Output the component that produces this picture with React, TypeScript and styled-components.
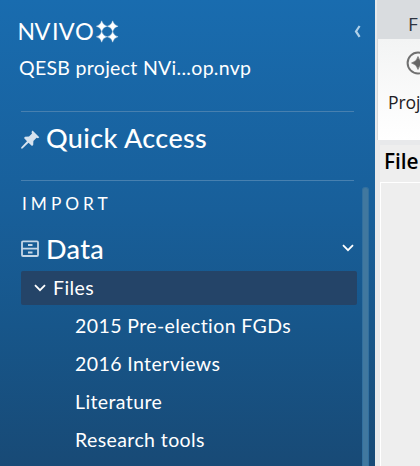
import React from "react";
import styled, { createGlobalStyle } from "styled-components";

const Global = createGlobalStyle`
  * { box-sizing: border-box; }
  body { margin: 0; overflow: hidden; font-family: Lato, "Open Sans", sans-serif; }
`;

const Window = styled.div`
  display: flex;
  width: 420px;
  height: 466px;
  overflow: hidden;
  background: #e8e9eb;
`;

const Sidebar = styled.aside`
  display: flex;
  flex-direction: column;
  flex: 0 0 375px;
  height: 466px;
  padding-left: 21px;
  color: #fff;
  background: linear-gradient(180deg, #196caf 0%, #185f9a 45%, #17568a 70%, #184a76 100%);
`;

const Brand = styled.header`
  display: flex;
  justify-content: space-between;
  align-items: flex-start;
  height: 53px;
  padding: 21px 14px 0 0;
  margin-left: -3px;
`;

const CollapseButton = styled.span`
  display: flex;
  margin-top: 4px;
`;

const ProjectName = styled.div`
  height: 58px;
  line-height: 30px;
  margin-left: -2px;
  font-size: 19.5px;
  letter-spacing: 0.3px;
  white-space: nowrap;
`;

const Rule = styled.hr`
  flex: none;
  width: 333px;
  height: 1px;
  margin: 0;
  border: 0;
  background: #4780b0;
`;

const Heading = styled.div<{ $height: number }>`
  display: flex;
  align-items: center;
  height: ${(p) => p.$height}px;
  width: 333px;
  font-size: 27px;
  font-weight: 500;
  letter-spacing: 0.35px;
  white-space: nowrap;
`;

const QuickAccess = styled(Heading)`
  margin-bottom: 13px;
`;

const HeadingIcon = styled.span`
  display: flex;
  width: 25px;
`;

const HeadingText = styled.span<{ $lift?: number }>`
  flex: 1;
  margin-top: -${(p) => p.$lift ?? 0}px;
`;

const Scroller = styled.div`
  display: flex;
  justify-content: space-between;
  flex: 1;
  padding-right: 6px;
`;

const Tree = styled.div`
  width: 336px;
`;

const SectionLabel = styled.div`
  height: 44px;
  padding: 0 0 0 1px;
  line-height: 45px;
  font-size: 17.3px;
  letter-spacing: 4px;
`;

const SelectedRow = styled.div`
  display: flex;
  align-items: center;
  height: 34px;
  margin-bottom: 2px;
  padding: 0 0 1px 13px;
  gap: 7px;
  border-radius: 2px;
  background: #244468;
  font-size: 19.5px;
  letter-spacing: 0.4px;
`;

const FileRow = styled.div`
  height: 38px;
  padding-left: 54px;
  line-height: 38px;
  font-size: 19.5px;
  letter-spacing: 0.4px;
  white-space: nowrap;
`;

const Scrollbar = styled.div`
  width: 7px;
  margin-top: 6px;
  border: 1px solid #32709f;
  border-bottom: 0;
  border-radius: 3px 3px 0 0;
  background: #41789f;
`;

const Workspace = styled.main`
  display: flex;
  flex-direction: column;
  flex: 1;
  min-width: 0;
  padding-left: 2px;
  color: #1f2024;
  white-space: nowrap;
  font-family: "Open Sans", sans-serif;
`;

const TabStrip = styled.div`
  height: 39px;
  padding: 10px 0 0 31px;
  line-height: 28px;
  font-size: 19px;
  color: #2d3440;
  background: #d9dcdf;
`;

const Ribbon = styled.div`
  height: 101px;
  padding: 12px 0 0 10px;
  border-left: 1px solid #d5d8da;
  background: linear-gradient(180deg, #f3f4f4, #fff);
`;

const RibbonIcon = styled.div`
  height: 24px;
  padding-left: 18px;
`;

const RibbonLabel = styled.div`
  margin-top: 13px;
  line-height: 28px;
  font-size: 17.6px;
  letter-spacing: -0.15px;
`;

const ListHeader = styled.div`
  height: 37px;
  margin: 5px 0 0 3px;
  padding-left: 4px;
  line-height: 33px;
  font-size: 20.8px;
  font-weight: 600;
  letter-spacing: -0.1px;
  color: #000;
  background: #eee;
`;

const ListBody = styled.div`
  flex: 1;
  margin-left: 3px;
  border: 1px solid #fff;
  border-width: 1px 0 0 1px;
  background: #eee;
`;

const LogoSvg = styled.svg`
  overflow: visible;
`;

const Logo = () => (
  <LogoSvg width="102" height="22" viewBox="0 0 102 22" fill="#fff">
    <g fontFamily="Lato, sans-serif" fontSize="23.5">
      <text x="-.6" y="19" textLength="17.5" lengthAdjust="spacingAndGlyphs">N</text>
      <text x="16.5" y="19">V</text>
      <text x="34" y="19">I</text>
      <text x="40.8" y="19">V</text>
      <text x="57" y="19">O</text>
    </g>
    {[[83.7, 5.2], [94.7, 5.2], [83.7, 15.8], [94.7, 15.8]].map(([x, y]) => (
      <path
        key={`${x}-${y}`}
        transform={`translate(${x} ${y})`}
        d="M0-5.4Q1-1 5.4 0Q1 1 0 5.4Q-1 1-5.4 0Q-1-1 0-5.4Z"
        stroke="#fff"
        strokeWidth=".3"
      />
    ))}
  </LogoSvg>
);

const Pin = () => (
  <svg width="19" height="19" viewBox="0 0 19 19" fill="#d5e2ef">
    <path d="M11.5 .5L18.3 7.2L17 8.2L15.6 7.7L12.4 11L12.2 15L11 16L7.5 12.8L1.5 18.4L0 18.6L.3 17.3L6 11.3L3 8L4 6.7L8 6.5L11 3.4L10.5 2Z" />
  </svg>
);

const Drawers = () => (
  <svg width="19" height="17" viewBox="0 0 19 17" fill="none" stroke="#c6d7e7" strokeWidth="1.8">
    <rect x="1" y="1.4" width="16" height="14.6" rx="1" />
    <path d="M1 8.7H17M7 5H11.5M7 12.5H11.5" />
  </svg>
);

const ChevronDown = () => (
  <svg width="12" height="8" viewBox="0 0 12 8" fill="none" stroke="#fff" strokeWidth="1.8">
    <path d="M1 1.2L6 6.2L11 1.2" />
  </svg>
);

const Collapse = () => (
  <svg width="7" height="13" viewBox="0 0 7 13" fill="none" stroke="#b0d1e9" strokeWidth="2.2">
    <path d="M5.6 1L2 6.4L5.6 11.8" />
  </svg>
);

const CompassStar = () => (
  <svg width="24" height="24" viewBox="0 0 24 24">
    <circle cx="12" cy="12" r="10.4" fill="none" stroke="#707070" strokeWidth="2" />
    <path d="M12 5.5Q13.3 10.7 18.5 12Q13.3 13.3 12 18.5Q10.7 13.3 5.5 12Q10.7 10.7 12 5.5Z" fill="#666" stroke="#666" strokeWidth=".6" />
  </svg>
);

const files = ["2015 Pre-election FGDs", "2016 Interviews", "Literature", "Research tools"];

export default function App() {
  return (
    <Window>
      <Global />
      <Sidebar>
        <Brand>
          <Logo />
          <CollapseButton><Collapse /></CollapseButton>
        </Brand>
        <ProjectName>QESB project NVi...op.nvp</ProjectName>
        <Rule />
        <QuickAccess $height={55}>
          <HeadingIcon><Pin /></HeadingIcon>
          <HeadingText $lift={4}>Quick Access</HeadingText>
        </QuickAccess>
        <Rule />
        <Scroller>
          <Tree>
            <SectionLabel>IMPORT</SectionLabel>
            <Heading $height={46}>
              <HeadingIcon><Drawers /></HeadingIcon>
              <HeadingText>Data</HeadingText>
              <ChevronDown />
            </Heading>
            <SelectedRow><ChevronDown />Files</SelectedRow>
            {files.map((f) => <FileRow key={f}>{f}</FileRow>)}
          </Tree>
          <Scrollbar />
        </Scroller>
      </Sidebar>
      <Workspace>
        <TabStrip>F</TabStrip>
        <Ribbon>
          <RibbonIcon><CompassStar /></RibbonIcon>
          <RibbonLabel>Proj</RibbonLabel>
        </Ribbon>
        <ListHeader>File</ListHeader>
        <ListBody />
      </Workspace>
    </Window>
  );
}
